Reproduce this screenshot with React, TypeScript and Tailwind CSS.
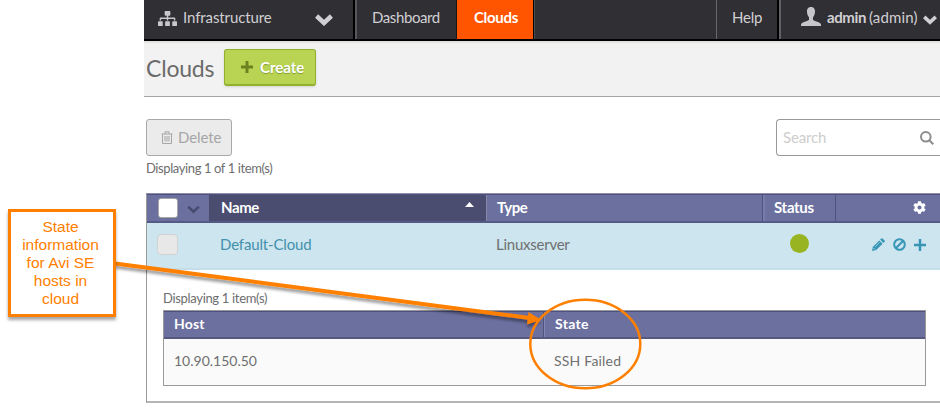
import React from "react";
import { FaSitemap, FaCog } from "react-icons/fa";

function Chevron({ className, width = 4 }: { className: string; width?: number }) {
  return (
    <svg viewBox="0 0 18 12" className={className} fill="none" stroke="currentColor" strokeWidth={width}>
      <path d="M1.6 2 L9 9 L16.4 2" />
    </svg>
  );
}

function TopNav() {
  return (
    <nav className="flex h-[41px] border-b-2 border-black bg-[#302f34] text-[15px] leading-[35px] text-[#d0d0d3]">
      <div className="flex w-[211px] items-center border-r-2 border-black pl-[14px]">
        <FaSitemap className="mt-[-2px] size-[19px] text-[#c8c8cc]" />
        <span className="ml-[6px] mt-[-4px] w-[89px] whitespace-nowrap tracking-[-0.1px]">Infrastructure</span>
        <Chevron className="ml-[43px] h-3 w-[18px]" width={4.500} />
      </div>
      <div className="w-[102px] border-l-2 border-r border-l-[#58575b] border-r-[#17171a] pl-[15px] tracking-[-0.4px]">Dashboard</div>
      <div className="w-[77px] border-r border-black bg-[#ff5500] pl-[17px] font-bold tracking-[-0.3px] text-white">Clouds</div>
      <div className="flex-1 border-l border-[#4c4b50]" />
      <div className="w-[63px] border-l border-r-2 border-l-[#68686c] border-r-black pl-[15px] tracking-[-0.2px]">Help</div>
      <div className="flex w-[161px] items-center border-l-2 border-[#626166] pl-[20px]">
        <svg viewBox="0 0 20 19" className="mt-[-7px] h-[19px] w-5 fill-[#c6c6ca]">
          <path d="M10 0C7 0 5.800 2.300 6 5c.1 2 .9 4 2 5.300v2.400c-.5 1.700-8 2-8 5V19h20v-1.300c0-3-7.500-3.300-8-5v-2.400c1.100-1.300 1.900-3.300 2-5.300.2-2.700-1-5-4-5z" />
        </svg>
        <span className="ml-[6px] mt-[-4px] w-[42px] font-bold tracking-[-0.4px]">admin</span>
        <span className="mt-[-4px] w-[54px] tracking-[0.15px]">(admin)</span>
        <Chevron className="h-[10px] w-[14px] shrink-0" width={4.500} />
      </div>
    </nav>
  );
}

function HostTable() {
  return (
    <div className="w-[763px] border border-[#999]">
      <div className="flex h-[28px] border-b-2 border-t border-b-[#555980] border-t-[#4d5080] bg-[#6b709f] text-[14px] font-bold leading-[24px] text-white">
        <div className="w-[380px] border-r border-[#50547c] pl-[10px] tracking-[0.2px]">Host</div>
        <div className="flex-1 border-l border-[#8387b2] pl-[10px] tracking-[0.3px]">State</div>
      </div>
      <div className="flex h-[46px] bg-[#fafafa] leading-[43px] text-[#707070]">
        <div className="w-[390px] pl-[10px]">10.90.150.50</div>
        <div className="tracking-[0.2px]">SSH Failed</div>
      </div>
    </div>
  );
}

function CloudTable() {
  return (
    <div className="ml-[2px] mt-[17px] h-[210px] border-b-2 border-l border-t border-b-[#b5b5b5] border-l-[#999] border-t-[#8c8eaa]">
      <div className="flex h-[29px] border-b-2 border-t border-b-[#555985] border-t-[#4d5080] bg-[#6b709f] text-[15px] font-bold leading-[24px] text-white">
        <div className="flex w-[62px] items-center pl-[11px]">
          <div className="size-5 rounded-[3px] border border-[#a5a5a5] bg-white" />
          <Chevron className="ml-[9px] mt-[2px] h-[9px] w-[13px] text-[#474b71]" width={3.500} />
        </div>
        <div className="flex w-[278px] justify-between border-r border-r-[#8588a6] bg-[#4a4d6f] pl-[12px] pr-3">
          <span className="tracking-[-0.4px]">Name</span>
          <svg viewBox="0 0 9 5" className="mt-[7px] h-[5px] w-[9px] fill-white"><path d="M0 5 4.500 0 9 5z" /></svg>
        </div>
        <div className="w-[276px] border-r border-[#50547c] pl-[10px] tracking-[-0.5px]">Type</div>
        <div className="w-[73px] border-l-2 border-r border-l-[#777ca8] border-r-[#50547c] pl-[9px] tracking-[-0.3px]">Status</div>
        <div className="flex flex-1 items-center justify-end pb-px pr-[14px]"><FaCog className="size-[13px]" /></div>
      </div>
      <div className="flex h-[47px] items-center border-b-2 border-[#c5dfe9] bg-[#cce5ee] pb-[2px] text-[15px] text-[#707070]">
        <div className="w-[73px] pl-[10px]"><div className="size-[21px] rounded-[4px] border border-[#d2d2d2] bg-[#e8e8e8]" /></div>
        <div className="w-[276px] tracking-[-0.15px] text-[#4390ad]">Default-Cloud</div>
        <div className="w-[294px] tracking-[-0.25px]">Linuxserver</div>
        <div className="mt-[-3px] size-[19px] rounded-full bg-[#98b521]" />
        <div className="flex flex-1 items-center justify-end gap-[8px] pr-[14px] text-[#3795b5]">
          <svg viewBox="0 0 13 13" className="size-[13px] fill-current">
            <path d="M0 13 .9 8.800 7.300 2.400 10.600 5.700 4.200 12.100zM8.100 1.600 9.300.4Q9.900-.1 10.500.4L12.600 2.500Q13.100 3.100 12.600 3.700L11.400 4.900z" />
            <path d="m1.500 10 1.500 1.500M3 8.800l4.500-4.500" fill="none" stroke="#cce5ee" strokeWidth=".7" />
          </svg>
          <svg viewBox="0 0 13 13" className="size-[13px] fill-none stroke-current stroke-2">
            <circle cx="6.500" cy="6.500" r="5.300" /><path d="m2.800 10.200 7.400-7.400" />
          </svg>
          <svg viewBox="0 0 12 12" className="size-3 fill-none stroke-current stroke-[2.500]">
            <path d="M6 0v12M0 6h12" />
          </svg>
        </div>
      </div>
      <div className="pl-[16px] pt-[19px] text-[14px]">
        <p className="mb-[3px] h-[18px] text-[13px] leading-[18px] tracking-[-0.32px] text-[#6e6e6e]">Displaying 1 item(s)</p>
        <HostTable />
      </div>
    </div>
  );
}

function Annotation() {
  return (
    <>
      <svg className="pointer-events-none absolute left-0 top-0 h-[412px] w-[940px]" viewBox="0 0 940 412">
        <defs>
          <filter id="shadow" x="-5%" y="-20%" width="110%" height="150%">
            <feDropShadow dx="0" dy="3" stdDeviation="1.5" floodColor="#000" floodOpacity="0.4" />
          </filter>
        </defs>
        <g filter="url(#shadow)">
          <path d="M115 263.500 530 318" stroke="#ff8000" strokeWidth="4" />
          <path d="M528.500 312 541 319.800 527 324.500z" fill="#ff8000" />
        </g>
        <ellipse cx="585.300" cy="344" rx="55" ry="44.300" fill="none" stroke="#ff8000" strokeWidth="2.500" />
      </svg>
      <div className="absolute left-[8px] top-[209px] h-[108px] w-[108px] border-[3px] border-[#ff8000] bg-white pr-[3px] pt-[6px] text-center font-['Liberation_Sans',Arial,sans-serif] text-[15.5px] leading-[18px] text-[#ff8000] shadow-[0_3px_3px_rgba(0,0,0,0.35)]">
        State<br />information<br />for Avi SE<br />hosts in<br />cloud
      </div>
    </>
  );
}

export default function App() {
  return (
    <div className="relative h-[412px] w-[940px] overflow-hidden bg-white font-[Lato,sans-serif]">
      <main className="ml-[144px]">
        <TopNav />
        <header className="flex h-[56px] border-b border-t-2 border-b-[#a5a5a5] border-t-[#e3e3df] bg-[#f2f2f2] pl-[2px]">
          <h1 className="w-[78px] pt-[8px] text-[23px] leading-[34px] tracking-[-0.2px] text-[#6b6b6b]">Clouds</h1>
          <button className="mt-[6px] flex h-[37px] w-[92px] items-center rounded-[3px] border border-b-2 border-[#91b02c] bg-[#b8d452] pl-[16px] text-[15px] font-bold text-white shadow-sm [text-shadow:0_1px_1px_#839b34]">
            <svg viewBox="0 0 12 12" className="mr-[7px] size-3 fill-none stroke-[#6c8420] stroke-3">
              <path d="M6 0v12M0 6h12" />
            </svg>
            Create
          </button>
        </header>
        <div className="flex h-[59px] items-end justify-between pl-[2px]">
          <button className="flex h-[37px] w-[86px] items-center rounded-[3px] border-[1.500px] border-[#a9a9a9] bg-[#ebebeb] pl-[14px] text-[15px] tracking-[-0.1px] text-[#a6a6a6]">
            <svg viewBox="0 0 12 13" className="mr-[5px] h-[13px] w-3 fill-none stroke-current">
              <path d="M.5 3h11M4 3V.8h4V3M1.500 3v9.500h9V3M4 5v5.500M6 5v5.500M8 5v5.500" />
            </svg>
            Delete
          </button>
          <div className="flex h-[37px] w-[164px] items-center justify-between rounded-l-[4px] border border-r-0 border-[#999] bg-white pl-[6px] pr-[6px] text-[15px] tracking-[-0.15px] text-[#cdcdcd]">
            Search
            <svg viewBox="0 0 14 14" className="h-[14px] w-[14px] fill-none stroke-[#8d8d8d] stroke-2">
              <circle cx="5.800" cy="5.800" r="4.800" /><path d="m9.300 9.300 4 4" />
            </svg>
          </div>
        </div>
        <p className="ml-[2px] mt-[2px] h-[18px] text-[13px] leading-[20px] tracking-[-0.4px] text-[#6e6e6e]">Displaying 1 of 1 item(s)</p>
        <CloudTable />
      </main>
      <Annotation />
    </div>
  );
}
